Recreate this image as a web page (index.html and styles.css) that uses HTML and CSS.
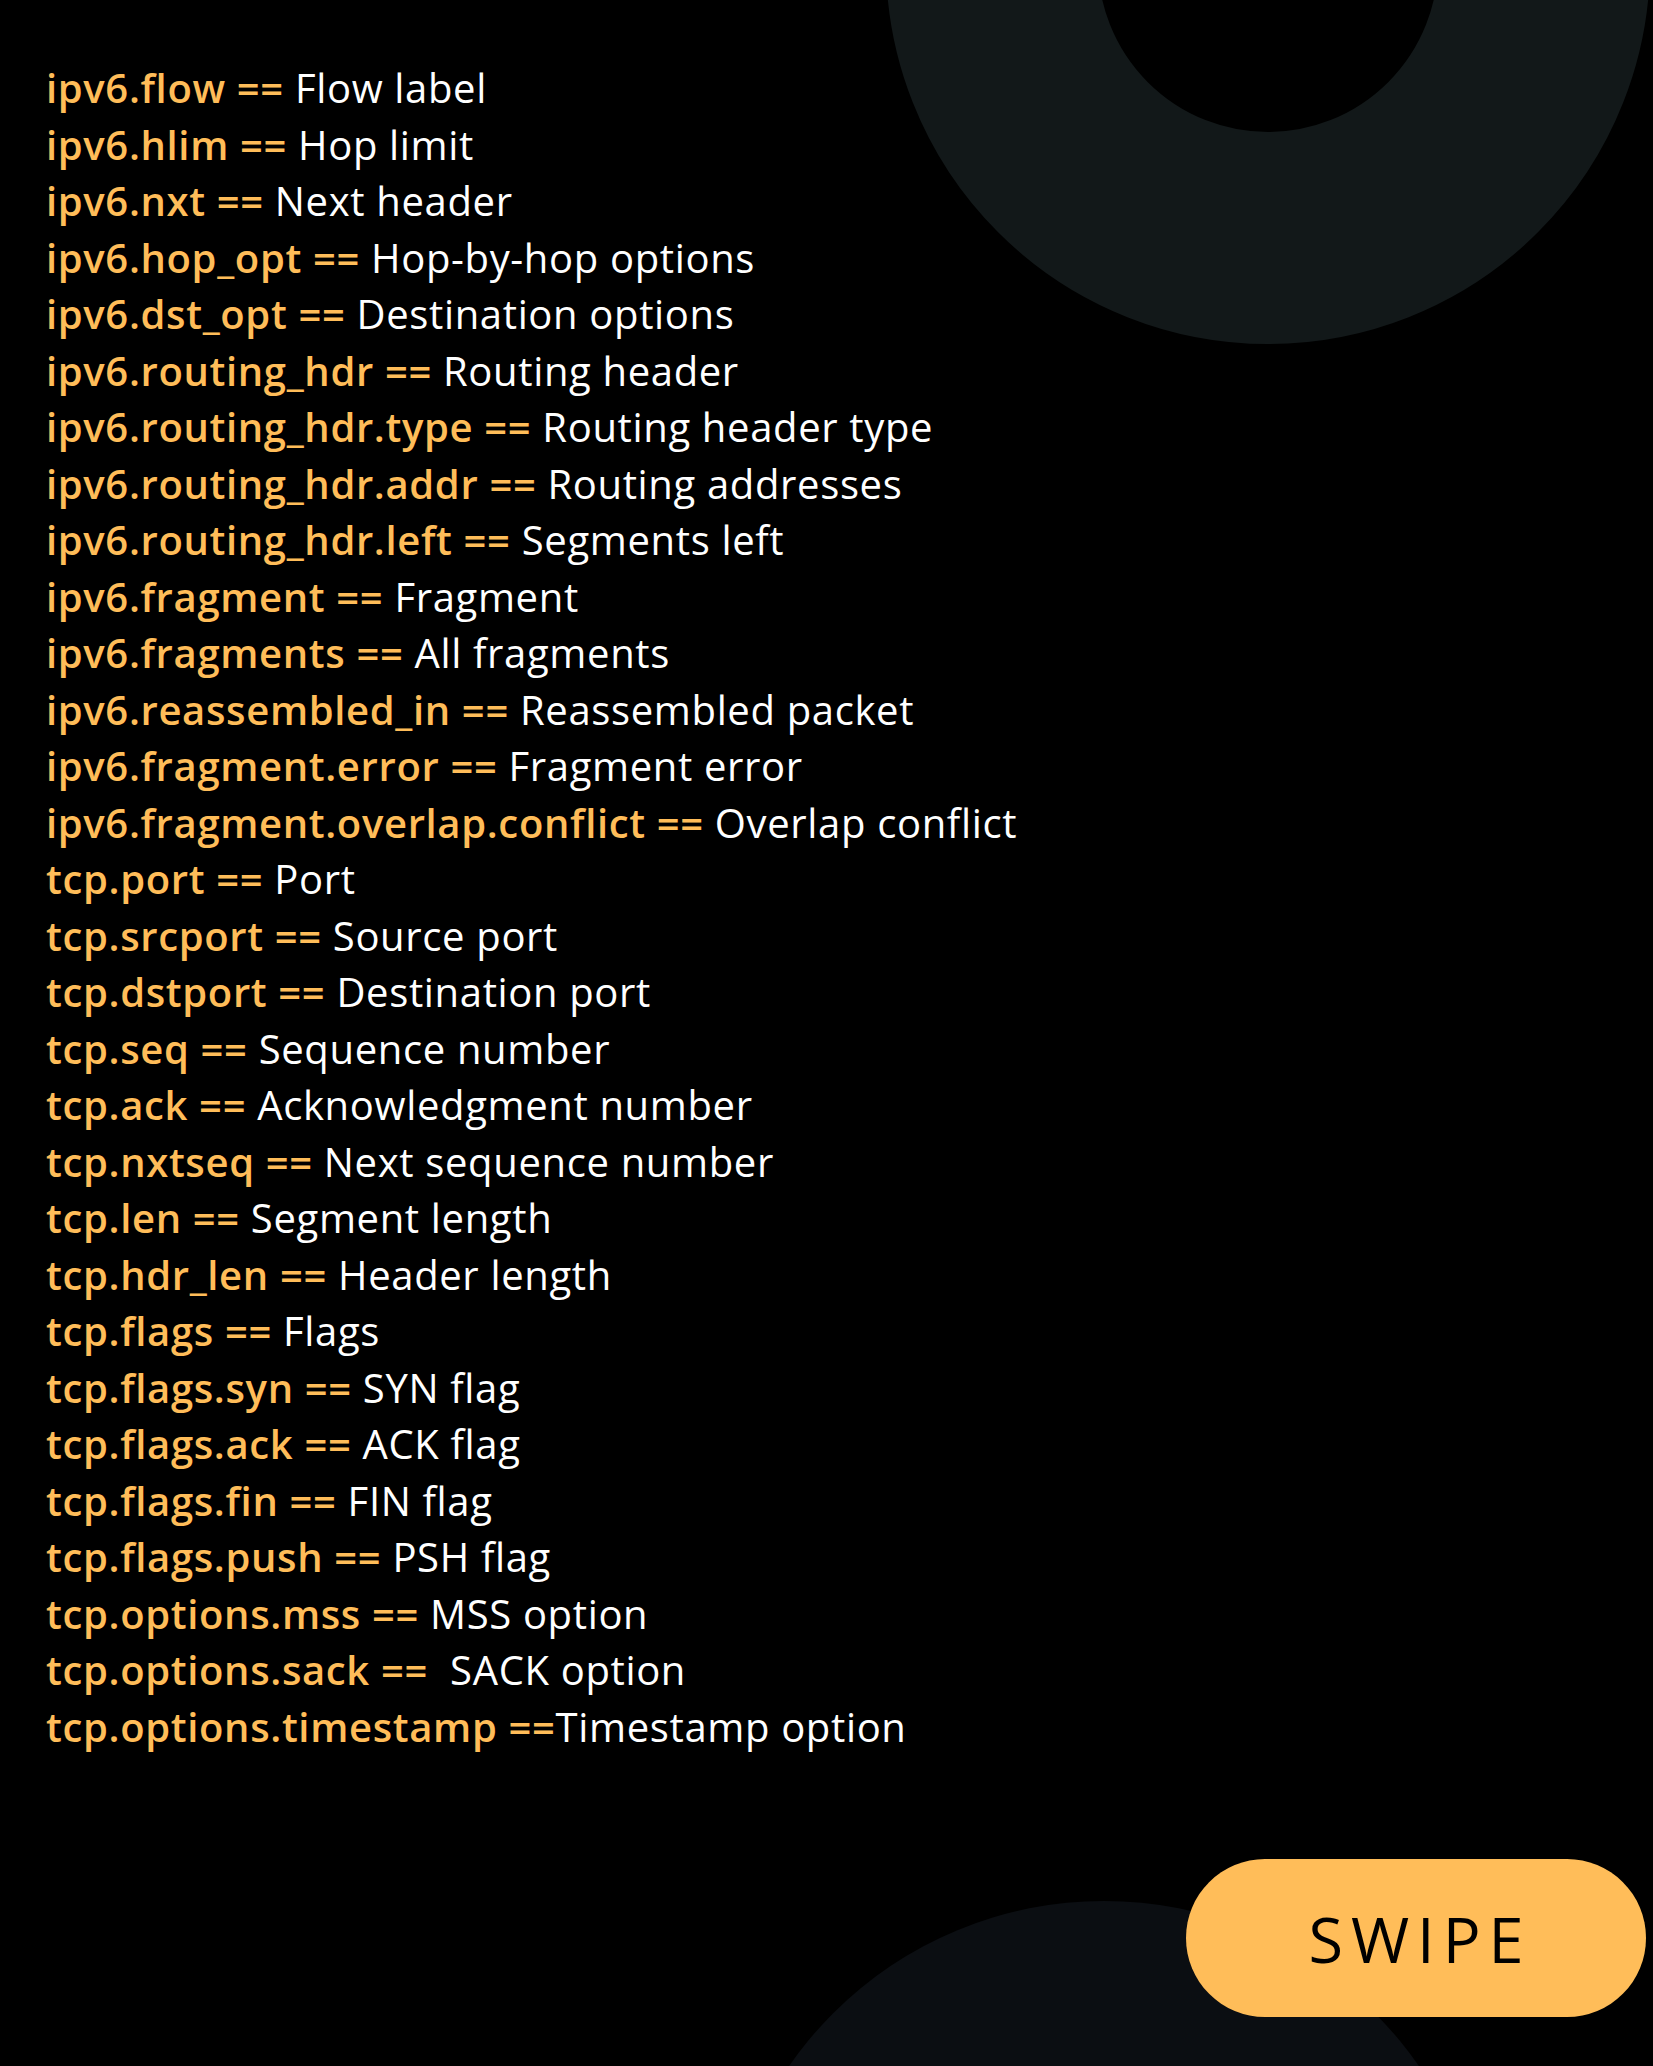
FILE: index.html
```html
<!DOCTYPE html>
<html lang="en">
<head>
<meta charset="utf-8">
<title>Wireshark filters</title>
<link rel="stylesheet" href="styles.css">
</head>
<body>
<div class="page">
  <div class="deco ring"></div>
  <div class="deco blob"></div>
  <ul class="filters">
    <li><span class="key">ipv6.flow ==</span> Flow label</li>
    <li><span class="key">ipv6.hlim ==</span> Hop limit</li>
    <li><span class="key">ipv6.nxt ==</span> Next header</li>
    <li><span class="key">ipv6.hop_opt ==</span> Hop-by-hop options</li>
    <li><span class="key">ipv6.dst_opt ==</span> Destination options</li>
    <li><span class="key">ipv6.routing_hdr ==</span> Routing header</li>
    <li><span class="key">ipv6.routing_hdr.type ==</span> Routing header type</li>
    <li><span class="key">ipv6.routing_hdr.addr ==</span> Routing addresses</li>
    <li><span class="key">ipv6.routing_hdr.left ==</span> Segments left</li>
    <li><span class="key">ipv6.fragment ==</span> Fragment</li>
    <li><span class="key">ipv6.fragments ==</span> All fragments</li>
    <li><span class="key">ipv6.reassembled_in ==</span> Reassembled packet</li>
    <li><span class="key">ipv6.fragment.error ==</span> Fragment error</li>
    <li><span class="key">ipv6.fragment.overlap.conflict ==</span> Overlap conflict</li>
    <li><span class="key">tcp.port ==</span> Port</li>
    <li><span class="key">tcp.srcport ==</span> Source port</li>
    <li><span class="key">tcp.dstport ==</span> Destination port</li>
    <li><span class="key">tcp.seq ==</span> Sequence number</li>
    <li><span class="key">tcp.ack ==</span> Acknowledgment number</li>
    <li><span class="key">tcp.nxtseq ==</span> Next sequence number</li>
    <li><span class="key">tcp.len ==</span> Segment length</li>
    <li><span class="key">tcp.hdr_len ==</span> Header length</li>
    <li><span class="key">tcp.flags ==</span> Flags</li>
    <li><span class="key">tcp.flags.syn ==</span> SYN flag</li>
    <li><span class="key">tcp.flags.ack ==</span> ACK flag</li>
    <li><span class="key">tcp.flags.fin ==</span> FIN flag</li>
    <li><span class="key">tcp.flags.push ==</span> PSH flag</li>
    <li><span class="key">tcp.options.mss ==</span> MSS option</li>
    <li><span class="key">tcp.options.sack ==</span>  SACK option</li>
    <li><span class="key">tcp.options.timestamp ==</span>Timestamp option</li>
  </ul>
  <div class="footer">
    <div class="swipe">SWIPE</div>
  </div>
</div>
</body>
</html>
```
FILE: styles.css
```css
html, body {
  margin: 0;
  padding: 0;
  background: #000;
}

.page {
  position: relative;
  width: 1653px;
  height: 2066px;
  overflow: hidden;
  background: #000;
  display: flex;
  flex-direction: column;
  box-sizing: border-box;
  padding: 60px 7px 49px 46px;
}

.deco {
  position: absolute;
  border-radius: 50%;
  z-index: 0;
}

.ring {
  left: 886px;
  top: -420px;
  width: 340px;
  height: 340px;
  border: 212px solid #121819;
  background: transparent;
}

.blob {
  left: 721px;
  top: 1901px;
  width: 766px;
  height: 766px;
  background: #0b0e12;
}

.filters {
  position: relative;
  z-index: 1;
  list-style: none;
  margin: 0;
  padding: 0;
  font-family: "Open Sans", "Noto Sans", sans-serif;
  font-size: 40px;
  line-height: 56.5px;
  letter-spacing: 0.65px;
  color: #ffffff;
}

.filters li {
  white-space: pre;
}

.key {
  color: #ffbd59;
  font-weight: 600;
}

.footer {
  position: relative;
  z-index: 1;
  margin-top: auto;
  display: flex;
  justify-content: flex-end;
}

.swipe {
  width: 460px;
  height: 158px;
  border-radius: 79px;
  background: #ffbd59;
  color: #000;
  display: flex;
  align-items: center;
  justify-content: center;
  padding-left: 8px;
  box-sizing: border-box;
  font-family: "Open Sans", "Noto Sans", sans-serif;
  font-size: 63px;
  letter-spacing: 8px;
  font-weight: 400;
}
```
